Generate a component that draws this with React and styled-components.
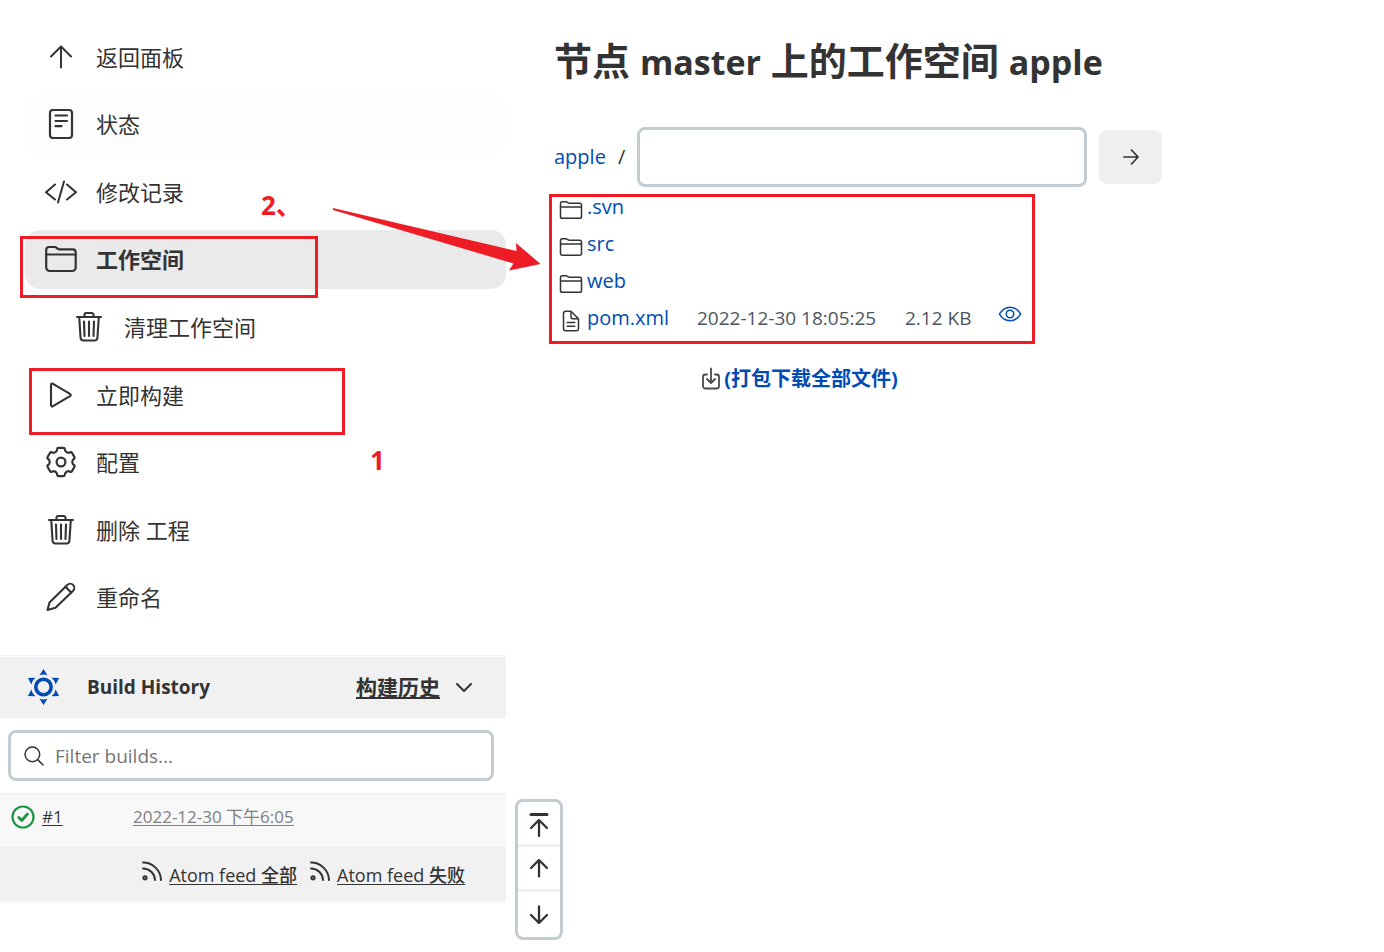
import React from "react";
import styled, { createGlobalStyle, css } from "styled-components";
import {
  IoDocumentTextOutline,
  IoEyeOutline,
  IoFolderOutline,
  IoSearchOutline,
} from "react-icons/io5";

const color = {
  text: "#333333",
  link: "#004bb4",
  muted: "#757575",
  panel: "#f1f1f1",
  border: "#c3ccd1",
  mark: "#ee1c25",
};

const GlobalStyle = createGlobalStyle`
  *, *::before, *::after { box-sizing: border-box; }
  body {
    margin: 0;
    background: #ffffff;
    color: ${color.text};
    font-family: "Open Sans", "Noto Sans CJK SC", sans-serif;
    font-size: 20px;
    line-height: 28px;
  }
`;

const Page = styled.div`
  position: relative;
  display: flex;
  align-items: flex-start;
`;

const Sidebar = styled.aside`
  flex: 0 0 506px;
  padding-top: 27px;
`;

const Tasks = styled.nav`
  display: grid;
  grid-auto-rows: 1fr;
  gap: 8px;
  min-height: 600px;
  padding-left: 25px;
  margin-bottom: 28px;
`;

const Task = styled.a`
  display: flex;
  align-items: center;
  gap: 19px;
  padding-left: ${(p) => (p.$nested ? 48 : 20)}px;
  border-radius: 15px;
  background: ${(p) => (p.$active ? "#eaeaea" : p.$tint ? "#fdfdfd" : "transparent")};
  color: ${color.text};
  font-size: 22px;
  font-weight: ${(p) => (p.$active ? 700 : 400)};
  text-decoration: none;

  svg {
    flex: none;
    width: 32px;
    height: 32px;
  }
`;

const History = styled.section`
  border-top: 1px solid ${color.panel};
  border-bottom: 1px solid ${color.panel};
  padding: 1px 0;
`;

const HistoryHeader = styled.header`
  display: flex;
  align-items: center;
  height: 61px;
  padding: 0 31px 2px 26px;
  background: ${color.panel};
`;

const HistoryTitle = styled.h2`
  flex: 1;
  margin: 0 0 0 26px;
  font-size: 19px;
  font-weight: 700;
`;

const TrendLink = styled.a`
  display: flex;
  align-items: center;
  gap: 13px;
  color: ${color.text};
  font-size: 21px;
  font-weight: 700;
  text-underline-offset: 2px;
`;

const Filter = styled.label`
  display: flex;
  align-items: center;
  gap: 9px;
  height: 51px;
  margin: 12px 12px 12px 8px;
  padding: 0 11px;
  border: 3px solid ${color.border};
  border-radius: 8px;

  input {
    flex: 1;
    min-width: 0;
    padding: 0;
    border: 0;
    outline: 0;
    background: transparent;
    color: ${color.text};
    font: inherit;
    font-size: 19px;
  }
  input::placeholder {
    color: ${color.muted};
    opacity: 1;
  }
`;

const Build = styled.div`
  display: flex;
  align-items: center;
  height: 53px;
  padding: 0 11px 8px;
  border-top: 2px solid ${color.panel};
  background: #f8f8f8;
  font-size: 17px;
`;

const BuildNumber = styled.a`
  width: 91px;
  margin-left: 7px;
  color: ${color.text};
  text-underline-offset: 2px;
`;

const BuildDate = styled.a`
  color: #808080;
  text-underline-offset: 2px;
`;

const Feeds = styled.div`
  display: flex;
  align-items: center;
  justify-content: flex-end;
  gap: 13px;
  height: 55px;
  padding: 2px 41px 0 0;
  background: ${color.panel};
`;

const Feed = styled.a`
  display: flex;
  align-items: center;
  gap: 7px;
  color: ${color.text};
  font-size: 18px;
  font-weight: 500;
  text-underline-offset: 2px;

  svg {
    margin-bottom: 8px;
  }
`;

const Main = styled.main`
  flex: 1;
  min-width: 0;
  padding: 30px 48px;
`;

const Title = styled.h1`
  margin: 0;
  font-size: 38px;
  font-weight: 700;
  line-height: 60px;
`;

const Latin = styled.span`
  font-size: 34px;
`;

const PathForm = styled.form`
  display: flex;
  align-items: center;
  margin-top: 35px;
`;

const Link = styled.a`
  color: ${color.link};
  text-decoration: none;
  font-weight: ${(p) => (p.$strong ? 700 : 400)};
`;

const Slash = styled.span`
  margin: 0 12px;
`;

const PathInput = styled.input`
  flex: 0 1 450px;
  min-width: 0;
  height: 60px;
  padding: 0 12px;
  border: 3px solid ${color.border};
  border-radius: 8px;
  background: #ffffff;
  font: inherit;
`;

const GoButton = styled.button`
  display: flex;
  align-items: center;
  justify-content: center;
  width: 63px;
  height: 54px;
  margin-left: 12px;
  padding: 0;
  border: 0;
  border-radius: 8px;
  background: #efefef;
  color: ${color.text};
`;

const Files = styled.table`
  width: 491px;
  margin-top: 1px;
  border-collapse: collapse;

  td {
    height: 37px;
    padding: 0;
    white-space: nowrap;
  }
`;

const IconCell = styled.td`
  width: 33px;

  svg {
    display: block;
    width: 24px;
    height: 24px;
    margin: 6px 0 0 5px;
  }
`;

const NameCell = styled.td`
  width: 110px;
`;

const DateCell = styled.td`
  width: 208px;
  color: #4d545d;
  font-size: 19px;
`;

const SizeCell = styled.td`
  width: 93px;
  color: #4d545d;
  font-size: 19px;
`;

const ViewCell = styled.td`
  svg {
    display: block;
    width: 24px;
    height: 24px;
    margin-bottom: 8px;
    color: ${color.link};
  }
`;

const Archive = styled.div`
  display: flex;
  align-items: center;
  justify-content: center;
  gap: 3px;
  padding-top: 29px;
`;

const Scroller = styled.div`
  position: fixed;
  left: 515px;
  bottom: 12px;
  display: flex;
  flex-direction: column;
  width: 48px;
  border: 3px solid ${color.border};
  border-radius: 8px;
  background: #ffffff;
  overflow: hidden;

  button {
    display: flex;
    align-items: center;
    justify-content: center;
    height: 45px;
    padding: 0;
    border: 0;
    background: transparent;
    color: ${color.text};
  }
  button:first-child {
    height: 42px;
    padding-top: 4px;
  }
  button:last-child {
    height: 48px;
  }
  button + button {
    border-top: 3px solid ${color.panel};
  }
`;

const onPage = css`
  position: absolute;
  left: ${(p) => p.$x}px;
  top: ${(p) => p.$y}px;
  pointer-events: none;
`;

const MarkBox = styled.div`
  ${onPage}
  width: ${(p) => p.$w}px;
  height: ${(p) => p.$h}px;
  border: 3px solid ${color.mark};
`;

const MarkText = styled.span`
  ${onPage}
  color: ${color.mark};
  font-size: 26px;
  font-weight: 700;
`;

const MarkArrow = styled.svg`
  ${onPage}
`;

const Stroke = ({ size = 32, box = 32, width = 2, children }) => (
  <svg
    width={size}
    height={size}
    viewBox={`0 0 ${box} ${box}`}
    fill="none"
    stroke="currentColor"
    strokeWidth={width}
    strokeLinecap="round"
    strokeLinejoin="round"
    aria-hidden="true"
  >
    {children}
  </svg>
);

const UpIcon = () => (
  <Stroke>
    <path d="M6 15.500L16 5.500l10 10M16 6v20.500" />
  </Stroke>
);

const ReaderIcon = () => (
  <Stroke width={2.2}>
    <rect x="5" y="2" width="22" height="28" rx="3" />
    <path d="M10.500 7.500h11.500M10.500 13h11.500M10.500 18.200h6" />
  </Stroke>
);

const CodeIcon = () => (
  <Stroke>
    <path d="M10 8.500L1 16.200l9 7.300M22 8.500l9 7.700-9 7.300M19 5.500l-6 21" />
  </Stroke>
);

const FolderIcon = () => (
  <Stroke width={2.2}>
    <path d="M1.200 24.500V7a3 3 0 0 1 3-3h5.500c2 0 2.500 2.300 4.500 2.300h13.500a3 3 0 0 1 3 3v15.200a3.500 3.500 0 0 1-3.500 3.500H4.700a3.500 3.500 0 0 1-3.500-3.500z" />
    <path d="M1.200 11.500h29.500" />
  </Stroke>
);

const TrashIcon = () => (
  <Stroke width={2.1}>
    <path d="M4 6h24M6.200 6l1.400 21a2.600 2.600 0 0 0 2.700 2.500h11.400a2.600 2.600 0 0 0 2.700-2.500l1.400-21" />
    <path d="M11.500 6V3.700A1.700 1.700 0 0 1 13.200 2h5.600a1.700 1.700 0 0 1 1.700 1.700V6" />
    <path d="M11 10.500l.500 14.500M16 10.500V25M21 10.500l-.500 14.500" />
  </Stroke>
);

const PlayIcon = () => (
  <Stroke width={2.1}>
    <path d="M6 6v20c0 1.200 1 1.700 2 1.200l17-10c1-.600 1-1.800 0-2.400L8 4.800c-1-.500-2 0-2 1.200z" />
  </Stroke>
);

const polar = (radius, degrees) => {
  const a = ((degrees - 90) * Math.PI) / 180;
  return `${(16 + radius * Math.cos(a)).toFixed(2)} ${(16 + radius * Math.sin(a)).toFixed(2)}`;
};

const gearPath =
  [0, 60, 120, 180, 240, 300]
    .map(
      (a, i) =>
        `${i ? "L" : "M"}${polar(13.3, a - 17)}Q${polar(14.6, a - 15)} ${polar(14.3, a - 10)}L${polar(14.3, a + 10)}Q${polar(14.6, a + 15)} ${polar(13.3, a + 17)}` +
        `Q${polar(11.6, a + 19)} ${polar(11.8, a + 23)}Q${polar(10.6, a + 30)} ${polar(11.8, a + 37)}Q${polar(11.6, a + 41)} ${polar(13.3, a + 43)}`
    )
    .join("") + "Z";

const GearIcon = () => (
  <Stroke width={2.2}>
    <path d={gearPath} />
    <circle cx="16" cy="16" r="4.400" />
  </Stroke>
);

const PencilIcon = () => (
  <Stroke width={2.1}>
    <path d="M2.500 29l2-7.500L22.300 3.900a4.100 4.100 0 0 1 5.800 5.800L10.500 26.800z" />
    <path d="M20.500 5.800l5.600 5.700" />
  </Stroke>
);

const ArrowIcon = ({ turn = 0 }) => (
  <Stroke size={20} box={20} width={2.3}>
    <path d="M2 10l8-8 8 8M10 2.500V18.500" transform={`rotate(${turn} 10 10)`} />
  </Stroke>
);

const TopIcon = () => (
  <svg width="20" height="26" viewBox="0 0 20 26" fill="none" stroke="currentColor" strokeWidth="2.300" strokeLinecap="round" strokeLinejoin="round" aria-hidden="true">
    <path d="M2 2.500h16" strokeWidth="3" />
    <path d="M2 16l8-8 8 8M10 8.500V24" />
  </svg>
);

const GoIcon = () => (
  <Stroke size={18} box={18} width={1.7}>
    <path d="M2 9h14M9.500 2l6.500 7-6.500 7" />
  </Stroke>
);

const ChevronIcon = () => (
  <Stroke size={22} box={22}>
    <path d="M4 8l7 7 7-7" />
  </Stroke>
);

const SunIcon = () => (
  <svg width="35" height="36" viewBox="0 0 35 36" fill={color.link} aria-hidden="true">
    <circle cx="17.500" cy="18" r="7.700" fill="none" stroke={color.link} strokeWidth="3.600" />
    {[0, 60, 120, 180, 240, 300].map((angle) => (
      <path key={angle} d="M17.500 0l4 6.300q-4-1.500-8 0z" transform={`rotate(${angle} 17.500 18)`} />
    ))}
  </svg>
);

const SuccessIcon = () => (
  <svg width="24" height="24" viewBox="0 0 24 24" fill="none" stroke="#1e9545" strokeLinecap="round" strokeLinejoin="round" aria-hidden="true">
    <circle cx="12" cy="12" r="10.500" strokeWidth="2.200" />
    <path d="M7.800 12.500l3 3 5.600-6.500" strokeWidth="2.800" />
  </svg>
);

const FeedIcon = () => (
  <Stroke size={20} box={20}>
    <path d="M1 1.500A18 18 0 0 1 19 19M1 7.500A12 12 0 0 1 13 19" />
    <circle cx="3" cy="16.800" r="1.600" />
  </Stroke>
);

const DownloadIcon = () => (
  <svg width="20" height="24" viewBox="0 0 20 24" fill="none" stroke="#4a4a4a" strokeWidth="1.800" strokeLinecap="round" strokeLinejoin="round" aria-hidden="true">
    <path d="M6 7.500H4.500A2.500 2.500 0 0 0 2 10v9a2.500 2.500 0 0 0 2.500 2.500h11A2.500 2.500 0 0 0 18 19v-9a2.500 2.500 0 0 0-2.500-2.500H14M10 1.500v14M6 12l4 4 4-4" />
  </svg>
);

const tasks = [
  { label: "返回面板", icon: <UpIcon /> },
  { label: "状态", icon: <ReaderIcon />, tint: true },
  { label: "修改记录", icon: <CodeIcon /> },
  { label: "工作空间", icon: <FolderIcon />, active: true },
  { label: "清理工作空间", icon: <TrashIcon />, nested: true },
  { label: "立即构建", icon: <PlayIcon /> },
  { label: "配置", icon: <GearIcon /> },
  { label: "删除 工程", icon: <TrashIcon /> },
  { label: "重命名", icon: <PencilIcon /> },
];

const files = [
  { name: ".svn" },
  { name: "src" },
  { name: "web" },
  { name: "pom.xml", date: "2022-12-30 18:05:25", size: "2.12 KB" },
];

export default function App() {
  return (
    <Page>
      <GlobalStyle />
      <Sidebar>
        <Tasks>
          {tasks.map((t) => (
            <Task key={t.label} href="#" $active={t.active} $nested={t.nested} $tint={t.tint}>
              {t.icon}
              {t.label}
            </Task>
          ))}
        </Tasks>
        <History>
          <HistoryHeader>
            <SunIcon />
            <HistoryTitle>Build History</HistoryTitle>
            <TrendLink href="#">
              构建历史
              <ChevronIcon />
            </TrendLink>
          </HistoryHeader>
          <Filter>
            <IoSearchOutline size={24} aria-hidden="true" />
            <input type="text" placeholder="Filter builds..." aria-label="Filter builds" />
          </Filter>
          <Build>
            <SuccessIcon />
            <BuildNumber href="#">#1</BuildNumber>
            <BuildDate href="#">2022-12-30 下午6:05</BuildDate>
          </Build>
          <Feeds>
            <Feed href="#">
              <FeedIcon />
              Atom feed 全部
            </Feed>
            <Feed href="#">
              <FeedIcon />
              Atom feed 失败
            </Feed>
          </Feeds>
        </History>
      </Sidebar>

      <Main>
        <Title>
          节点 <Latin>master</Latin> 上的工作空间 <Latin>apple</Latin>
        </Title>
        <PathForm onSubmit={(e) => e.preventDefault()}>
          <Link href="#">apple</Link>
          <Slash>/</Slash>
          <PathInput type="text" aria-label="路径" />
          <GoButton type="submit" aria-label="前往">
            <GoIcon />
          </GoButton>
        </PathForm>
        <Files>
          <tbody>
            {files.map((f) => (
              <tr key={f.name}>
                <IconCell>{f.size ? <IoDocumentTextOutline /> : <IoFolderOutline />}</IconCell>
                <NameCell>
                  <Link href="#">{f.name}</Link>
                </NameCell>
                <DateCell>{f.date}</DateCell>
                <SizeCell>{f.size}</SizeCell>
                <ViewCell>
                  {f.size && (
                    <Link href="#" aria-label="查看">
                      <IoEyeOutline />
                    </Link>
                  )}
                </ViewCell>
              </tr>
            ))}
            <tr>
              <td colSpan={5}>
                <Archive>
                  <DownloadIcon />
                  <Link href="#" $strong>
                    (打包下载全部文件)
                  </Link>
                </Archive>
              </td>
            </tr>
          </tbody>
        </Files>
      </Main>

      <Scroller>
        <button type="button" aria-label="顶部">
          <TopIcon />
        </button>
        <button type="button" aria-label="向上">
          <ArrowIcon />
        </button>
        <button type="button" aria-label="向下">
          <ArrowIcon turn={180} />
        </button>
      </Scroller>

      <MarkBox $x={20} $y={236} $w={298} $h={62} />
      <MarkBox $x={29} $y={368} $w={316} $h={67} />
      <MarkBox $x={549} $y={194} $w={486} $h={150} />
      <MarkText $x={261} $y={191}>2、</MarkText>
      <MarkText $x={370} $y={446}>1</MarkText>
      <MarkArrow $x={330} $y={200} width="212" height="74" viewBox="0 0 212 74" fill={color.mark} aria-hidden="true">
        <path d="M3 8L186.500 51 186 43l24.500 21L179 70.500l4.500-7L3 10z" />
      </MarkArrow>
    </Page>
  );
}
